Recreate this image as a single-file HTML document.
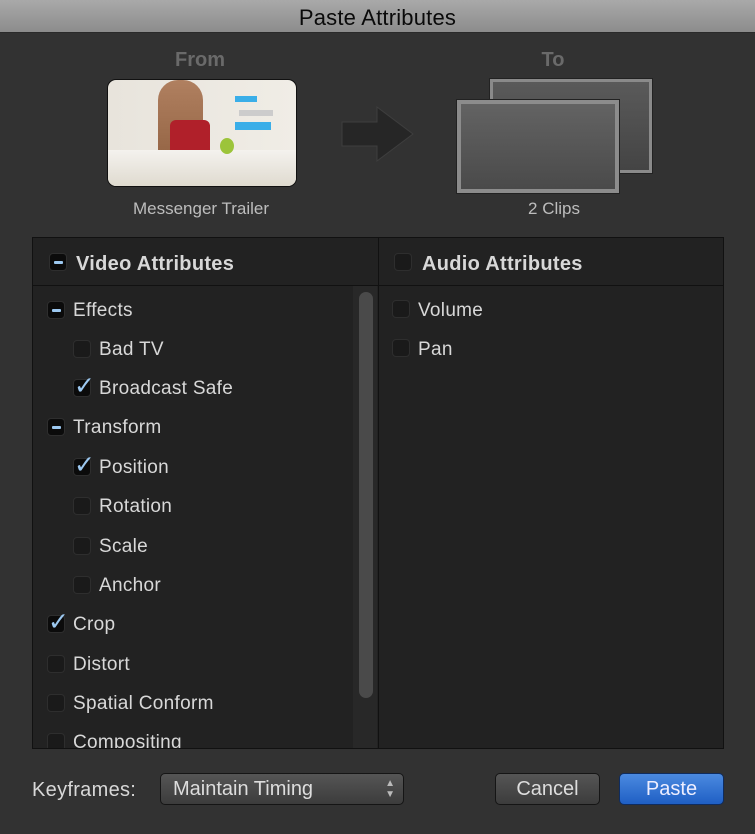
<!DOCTYPE html>
<html><head><style>
*{margin:0;padding:0;box-sizing:border-box}
body{width:755px;height:834px;background:#323232;font-family:"Liberation Sans",sans-serif;position:relative;overflow:hidden;color:#d4d4d4}
.a{position:absolute}
#title{left:0;top:0;width:755px;height:33px;background:linear-gradient(#a9a9a9,#8c8c8c);border-bottom:1px solid #2a2a2a;text-align:center;font-size:22px;line-height:35px;color:#0a0a0a;letter-spacing:0.2px}
.lbl{font-size:20px;font-weight:bold;color:#6a6a6a;text-align:center}
.cap{font-size:17px;color:#bdbdbd;text-align:center}
#panel{left:32px;top:237px;width:692px;height:512px;background:#222;border:1px solid #111}
.cb{position:absolute;width:18px;height:18px;border-radius:4px;background:#1a1a1a;border:1px solid #2e2e2e}
.cb.on{background:#0b0b0b}
.minus::after{content:"";position:absolute;left:4px;top:7px;width:9px;height:3px;background:#9cc8f0;border-radius:1px}
.chk{position:absolute;left:0px;top:-9px;font-size:25px;color:#9cc8f0}
.t{position:absolute;font-size:19px;color:#d8d8d8;line-height:20px;letter-spacing:0.3px}
.btn{position:absolute;height:32px;border-radius:5px;border:1px solid #151515;background:linear-gradient(#555,#3c3c3c);font-size:20px;color:#ddd;text-align:center;line-height:30px}
</style></head><body>
<div id="title" class="a">Paste Attributes</div>
<div class="a lbl" style="left:140px;top:49px;width:120px">From</div>
<div class="a lbl" style="left:513px;top:49px;width:80px">To</div>
<div class="a" style="left:107px;top:79px;width:190px;height:108px;border-radius:9px;border:1px solid #111;overflow:hidden;background:linear-gradient(90deg,#e8e4dc,#f0ede6);">
 <div class="a" style="left:50px;top:0;width:45px;height:108px;background:linear-gradient(#b08060,#8a5a3a);border-radius:20px 20px 0 0"></div>
 <div class="a" style="left:62px;top:40px;width:40px;height:50px;background:#b0202a;border-radius:6px"></div>
 <div class="a" style="left:0;top:70px;width:190px;height:40px;background:linear-gradient(#f4f2ee,#ddd8cc)"></div>
 <div class="a" style="left:112px;top:58px;width:14px;height:16px;background:#9cc43a;border-radius:50%"></div>
 <div class="a" style="left:127px;top:16px;width:22px;height:6px;background:#3aaee8"></div>
 <div class="a" style="left:131px;top:30px;width:34px;height:6px;background:#ccc"></div>
 <div class="a" style="left:127px;top:42px;width:36px;height:8px;background:#3aaee8"></div>
</div>
<div class="a cap" style="left:100px;top:199px;width:202px">Messenger Trailer</div>
<svg class="a" style="left:340px;top:105px" width="75" height="58"><path d="M2 17H37V2L73 29L37 56V41H2Z" fill="#262626" stroke="#3e3e3e"/></svg>
<div class="a" style="left:490px;top:79px;width:162px;height:94px;background:linear-gradient(#5a5a5a,#444);border:3px solid #8a8a8a;outline:1px solid #222"></div>
<div class="a" style="left:457px;top:100px;width:162px;height:93px;background:linear-gradient(#636363,#4a4a4a);border:4px solid #8c8c8c;outline:1px solid #222"></div>
<div class="a cap" style="left:490px;top:199px;width:128px">2 Clips</div>

<div id="panel" class="a">
 <div class="a" style="left:0;top:47px;width:690px;height:1px;background:#111"></div>
 <div class="a" style="left:345px;top:0;width:1px;height:510px;background:#111"></div>
 <div class="a" style="left:320px;top:48px;width:24px;height:462px;background:#282828"></div>
 <div class="a" style="left:326px;top:54px;width:14px;height:406px;background:#4a4a4a;border-radius:7px"></div>
 <div class="cb on minus" style="left:16px;top:15px"></div><div class="t" style="left:43px;top:16px;font-weight:bold;font-size:20px">Video Attributes</div>
 <div class="cb" style="left:361px;top:15px"></div><div class="t" style="left:389px;top:16px;font-weight:bold;font-size:20px">Audio Attributes</div>
</div>
<div class="a" style="left:33px;top:286px;width:318px;height:462px;overflow:hidden">
 <div class="cb on minus" style="left:14px;top:15px"></div><div class="t" style="left:40px;top:15px">Effects</div>
 <div class="cb" style="left:40px;top:54px"></div><div class="t" style="left:66px;top:54px">Bad TV</div>
 <div class="cb on" style="left:40px;top:93px"><span class="chk">✓</span></div><div class="t" style="left:66px;top:93px">Broadcast Safe</div>
 <div class="cb on minus" style="left:14px;top:132px"></div><div class="t" style="left:40px;top:132px">Transform</div>
 <div class="cb on" style="left:40px;top:172px"><span class="chk">✓</span></div><div class="t" style="left:66px;top:172px">Position</div>
 <div class="cb" style="left:40px;top:211px"></div><div class="t" style="left:66px;top:211px">Rotation</div>
 <div class="cb" style="left:40px;top:251px"></div><div class="t" style="left:66px;top:251px">Scale</div>
 <div class="cb" style="left:40px;top:290px"></div><div class="t" style="left:66px;top:290px">Anchor</div>
 <div class="cb on" style="left:14px;top:329px"><span class="chk">✓</span></div><div class="t" style="left:40px;top:329px">Crop</div>
 <div class="cb" style="left:14px;top:369px"></div><div class="t" style="left:40px;top:369px">Distort</div>
 <div class="cb" style="left:14px;top:408px"></div><div class="t" style="left:40px;top:408px">Spatial Conform</div>
 <div class="cb" style="left:14px;top:447px"></div><div class="t" style="left:40px;top:447px">Compositing</div>
</div>
<div class="cb" style="left:392px;top:300px"></div><div class="t" style="left:418px;top:301px">Volume</div>
<div class="cb" style="left:392px;top:339px"></div><div class="t" style="left:418px;top:340px">Pan</div>

<div class="t" style="left:32px;top:780px;font-size:20px">Keyframes:</div>
<div class="btn" style="left:160px;top:773px;width:244px;text-align:left;padding-left:12px">Maintain Timing<span style="position:absolute;right:8px;top:4px;font-size:10px;line-height:11px;color:#bbb">▲<br>▼</span></div>
<div class="btn" style="left:495px;top:773px;width:105px">Cancel</div>
<div class="btn" style="left:619px;top:773px;width:105px;background:linear-gradient(#4b8ae0,#1f5fc4);border-color:#0e2c60;color:#eef">Paste</div>
</body></html>
